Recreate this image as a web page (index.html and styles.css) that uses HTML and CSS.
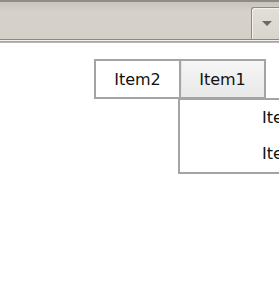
FILE: index.html
```html
<!DOCTYPE html>
<html lang="en">
<head>
    <meta charset="UTF-8">
    <meta name="viewport" content="width=device-width, initial-scale=1.0">
    <title>Tabs</title>
    <link rel="stylesheet" href="styles.css">
</head>
<body>

<!-- Toolbar -->
<div class="toolbar">
    <div class="toolbar-fill"></div>
    <button class="drop-btn" type="button"><span class="arrow"></span></button>
</div>

<!-- Tabs with open menu -->
<div class="content">
    <div class="tabs">
        <div class="tab">Item2</div>
        <div class="tab tab-active">Item1</div>

        <div class="menu">
            <div class="menu-item">Item3</div>
            <div class="menu-item">Item4</div>
        </div>
    </div>
</div>

</body>
</html>
```

FILE: styles.css
```css
html, body {
    margin: 0;
    height: 100%;
    overflow: hidden;
    background: #ffffff;
    font-family: "DejaVu Sans", Verdana, sans-serif;
}

.toolbar {
    display: flex;
    height: 37px;
    background: linear-gradient(#c9c5bd, #d6d2cb 30%, #d4d0c8);
    border-top: 2px solid #8f8c86;
    border-bottom: 1px solid #8a8781;
    box-shadow: 0 1px 0 #f4f2ee, 0 2px 0 #a8a6a1, 0 3px 0 #b9b7b3;
}

.toolbar-fill {
    flex: 1;
}

.drop-btn {
    width: 28px;
    height: 32px;
    margin-top: 5px;
    padding: 0;
    border: 1px solid #8e8b85;
    border-right: none;
    border-bottom: none;
    border-radius: 3px 0 0 0;
    background: linear-gradient(#e2dfd9, #d8d5ce);
    box-shadow: inset 1px 1px 0 #f3f1ed;
    display: flex;
    justify-content: center;
    align-items: center;
}

.arrow {
    width: 0;
    height: 0;
    margin-left: 2px;
    border-left: 5px solid transparent;
    border-right: 5px solid transparent;
    border-top: 5px solid #6b6964;
}

.content {
    padding: 19px 0 0 94px;
}

.tabs {
    position: relative;
    display: inline-flex;
    border: 2px solid #a4a4a4;
}

.tab {
    width: 83px;
    height: 36px;
    font-size: 16px;
    color: #111111;
    display: flex;
    align-items: center;
    justify-content: center;
    background: #ffffff;
}

.tab-active {
    border-left: 2px solid #a4a4a4;
    box-shadow: inset 1px 0 0 #e6e6e6;
    background: linear-gradient(#f6f6f6, #e8e8e8);
}

.menu {
    position: absolute;
    left: 82px;
    top: 37px;
    width: 200px;
    padding: 0 0 0 82px;
    background: #ffffff;
    border: 2px solid #a4a4a4;
}

.menu-item {
    height: 36px;
    line-height: 36px;
    font-size: 16px;
    color: #111111;
}
```
